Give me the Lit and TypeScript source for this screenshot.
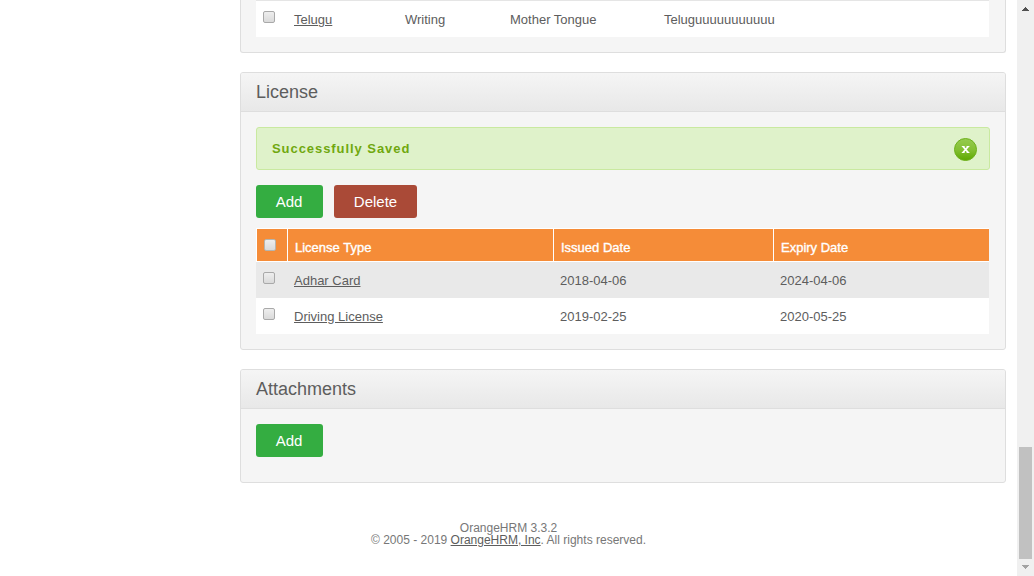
import { LitElement, html, css, svg } from "lit";
import { customElement } from "lit/decorators.js";

interface License {
  type: string;
  issued: string;
  expiry: string;
}

@customElement("app-root")
export class AppRoot extends LitElement {
  static styles = css`
    :host {
      display: flex;
      height: 576px;
      overflow: hidden;
      background: #fff;
      color: #5d5d5d;
      font: 13px/16px "Liberation Sans", Arial, sans-serif;
    }
    * { box-sizing: border-box; }
    a { color: inherit; text-decoration: underline; }
    .page { width: 1017px; flex: none; }
    .panel {
      width: 766px;
      margin: 0 0 19px 240px;
      border: 1px solid #dedede;
      border-radius: 3px;
      background: #f5f5f5;
    }
    .languages { height: 53px; border-top: 0; border-radius: 0 0 3px 3px; padding: 0 16px 15px 15px; }
    .license { height: 278px; }
    .attachments { height: 114px; }
    .heading {
      height: 39px;
      margin: 0;
      padding: 0 15px;
      border-bottom: 1px solid #dedede;
      border-radius: 2px 2px 0 0;
      background: linear-gradient(#f5f5f5, #e8e8e8);
      font-size: 18px;
      font-weight: 400;
      line-height: 39px;
    }
    .body { padding: 15px; }
    .message {
      display: flex;
      align-items: center;
      justify-content: space-between;
      height: 43px;
      padding: 0 12px 0 15px;
      border: 1px solid #c9e9a0;
      border-radius: 3px;
      background: #dff2ca;
      color: #70a80f;
      font-weight: 700;
      letter-spacing: 0.94px;
    }
    .close { display: block; margin-top: 1px; }
    .buttons { display: flex; gap: 11px; }
    .message + .buttons { margin-top: 15px; }
    .button {
      width: 67px;
      height: 33px;
      padding: 0 1px 0 0;
      border: 0;
      border-radius: 3px;
      background: #34ad41;
      color: #fff;
      font: 15px/33px "Liberation Sans", Arial, sans-serif;
    }
    .delete { width: 83px; padding: 0; background: #aa4a37; }
    .table { width: 733px; margin-top: 10px; }
    .row {
      display: grid;
      grid-template-columns: 31px 266px 220px 216px;
      height: 36px;
      background: #fff;
    }
    .odd { background: #e9e9e9; }
    .row > .cell { padding: 11px 0 0 7px; white-space: nowrap; }
    .row > .cell:first-child { padding-top: 10px; }
    .head {
      height: 34px;
      border: solid #fff;
      border-width: 1px 0 1px 1px;
      background: #f58c38;
      color: #fff;
      grid-template-columns: 31px 266px 220px 215px;
    }
    .head > .cell { border-left: 1px solid #fff; -webkit-text-stroke: 0.35px #fff; }
    .row.head > .cell:first-child { padding-top: 10px; }
    .head > .cell:first-child { border: 0; }
    .head > .cell:nth-child(n + 2) { margin-left: -1px; }
    .language {
      grid-template-columns: 31px 111px 105px 154px 1fr;
      height: 37px;
      border-top: 1px solid #e5e5e5;
    }
    .box {
      display: block;
      width: 12px;
      height: 12px;
      border: 1px solid #a9a9a9;
      border-radius: 2px;
      background: linear-gradient(#eee, #dadada);
    }
    .head .box { border-color: #b5b5b0; }
    .footer {
      padding-top: 20px;
      text-align: center;
      font-size: 12px;
      line-height: 12px;
      color: #777;
    }
    .footer a { color: #5d5d5d; }
    .scrollbar {
      display: flex;
      flex: none;
      flex-direction: column;
      align-items: center;
      justify-content: space-between;
      width: 17px;
      background: #f0f0f0;
    }
    .arrow { display: block; }
    .thumb { width: 13px; height: 112px; margin: auto 2px 0; background: #c1c1c1; }
  `;

  private licenses: License[] = [
    { type: "Adhar Card", issued: "2018-04-06", expiry: "2024-04-06" },
    { type: "Driving License", issued: "2019-02-25", expiry: "2020-05-25" },
  ];

  private box() {
    return html`<span class="box" role="checkbox" aria-checked="false"></span>`;
  }

  private arrow(path: string, color: string) {
    return html`<svg class="arrow" width="17" height="17" shape-rendering="crispEdges">${svg`<path d=${path} fill=${color} />`}</svg>`;
  }

  render() {
    return html`
      <main class="page">
        <section class="panel languages">
          <div class="row language">
            <div class="cell">${this.box()}</div>
            <div class="cell"><a>Telugu</a></div>
            <div class="cell">Writing</div>
            <div class="cell">Mother Tongue</div>
            <div class="cell">Teluguuuuuuuuuuu</div>
          </div>
        </section>
        <section class="panel license">
          <h1 class="heading">License</h1>
          <div class="body">
            <div class="message">
              <span>Successfully Saved</span>
              <svg class="close" width="23" height="23" viewBox="0 0 23 23">
                <defs>
                  <linearGradient id="green" x2="0" y2="1">
                    <stop offset="0" stop-color="#96cb50" />
                    <stop offset=".5" stop-color="#84c033" />
                    <stop offset="1" stop-color="#5ca800" />
                  </linearGradient>
                </defs>
                <circle cx="11.5" cy="11.5" r="11" fill="url(#green)" stroke="#6db01c" />
                <path d="M9 8.5l5.2 6M14.2 8.5l-5.2 6" stroke="#fff" stroke-width="1.8" />
                <path d="M7.8 8.5h2.8M12.6 8.5h2.8M7.8 14.5h2.8M12.6 14.5h2.8" stroke="#fff" stroke-width="1" />
              </svg>
            </div>
            <div class="buttons">
              <button class="button">Add</button>
              <button class="button delete">Delete</button>
            </div>
            <div class="table">
              <div class="row head">
                <div class="cell">${this.box()}</div>
                <div class="cell">License Type</div>
                <div class="cell">Issued Date</div>
                <div class="cell">Expiry Date</div>
              </div>
              ${this.licenses.map(
                (l, i) => html`<div class="row ${i % 2 ? "" : "odd"}">
                  <div class="cell">${this.box()}</div>
                  <div class="cell"><a>${l.type}</a></div>
                  <div class="cell">${l.issued}</div>
                  <div class="cell">${l.expiry}</div>
                </div>`
              )}
            </div>
          </div>
        </section>
        <section class="panel attachments">
          <h1 class="heading">Attachments</h1>
          <div class="body">
            <div class="buttons"><button class="button">Add</button></div>
          </div>
        </section>
        <footer class="footer">
          OrangeHRM 3.3.2<br />© 2005 - 2019 <a>OrangeHRM, Inc</a>. All rights reserved.
        </footer>
      </main>
      <aside class="scrollbar">
        ${this.arrow("M8 7h1v1h1v1h1v1h1v1H5v-1h1V9h1V8h1z", "#505050")}
        <div class="thumb"></div>
        ${this.arrow("M5 6h7v1h-1v1h-1v1H9v1H8V9H7V8H6V7H5z", "#a3a3a3")}
      </aside>
    `;
  }
}
